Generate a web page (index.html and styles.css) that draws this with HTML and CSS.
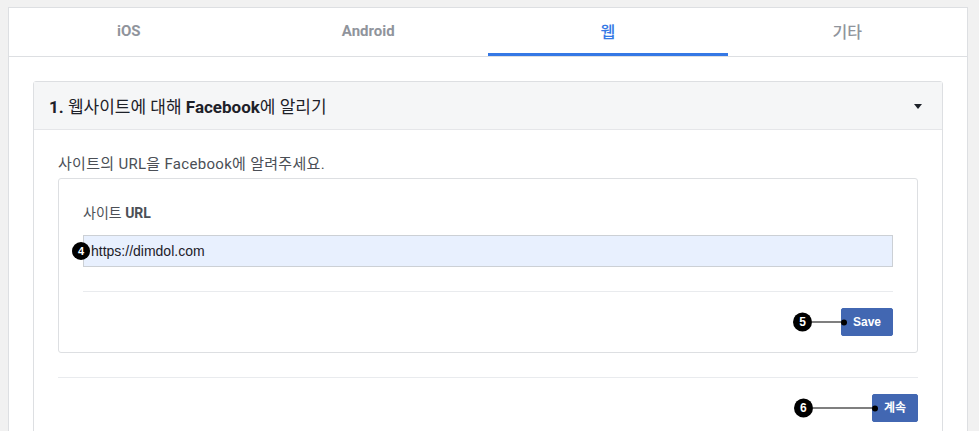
FILE: index.html
```html
<!DOCTYPE html>
<html lang="ko">
<head>
<meta charset="utf-8">
<link rel="stylesheet" href="styles.css">
</head>
<body>
<div class="card">
  <nav class="tabs">
    <div class="tab">iOS</div>
    <div class="tab">Android</div>
    <div class="tab ko active">웹</div>
    <div class="tab ko">기타</div>
  </nav>
  <section class="panel">
    <header class="panel-head">
      <span class="panel-title"><b>1.</b> 웹사이트에 대해 <b>Facebook</b>에 알리기</span>
      <span class="caret"></span>
    </header>
    <div class="panel-body">
      <p class="intro">사이트의 URL을 Facebook에 알려주세요.</p>
      <div class="box">
        <div class="label">사이트 <b>URL</b></div>
        <div class="input-wrap">
          <div class="input">https://dimdol.com</div>
          <span class="badge badge-input">4</span>
        </div>
        <div class="rule"></div>
        <div class="actions">
          <div class="btn-wrap">
            <span class="callout callout-save"><span class="badge">5</span><span class="line"></span><span class="dot"></span></span>
            <button class="btn">Save</button>
          </div>
        </div>
      </div>
      <div class="rule outer"></div>
      <div class="actions">
        <div class="btn-wrap">
          <span class="callout callout-next"><span class="badge">6</span><span class="line"></span><span class="dot"></span></span>
          <button class="btn">계속</button>
        </div>
      </div>
    </div>
  </section>
</div>
</body>
</html>
```

FILE: styles.css
```css
* { box-sizing: border-box; }
html, body { margin: 0; padding: 0; }
body {
  background: #f1f1f1;
  font-family: Roboto, "Liberation Sans", "Noto Sans CJK KR", sans-serif;
  color: #1d2129;
  height: 431px;
  overflow: hidden;
  padding: 7px 0 0 8px;
}
.card {
  width: 960px;
  height: 600px;
  background: #fff;
  border: 1px solid #dddfe2;
}
.tabs {
  display: flex;
  height: 49px;
  border-bottom: 1px solid #dddfe2;
}
.tab {
  flex: 1;
  display: flex;
  align-items: center;
  justify-content: center;
  font-size: 15px;
  font-weight: 700;
  color: #90949c;
  padding-bottom: 2px;
  font-family: Roboto, "Noto Sans CJK KR", sans-serif;
}
.tab.ko {
  font-size: 16px;
  font-weight: 500;
}
.tab.active {
  color: #3578e5;
  border-bottom: 3px solid #3578e5;
  padding-bottom: 0;
  padding-top: 1px;
}
.panel {
  margin: 24px 24px 0;
  border: 1px solid #dddfe2;
  border-radius: 3px 3px 0 0;
  height: 400px;
}
.panel-head {
  height: 48px;
  background: #f5f6f7;
  border-bottom: 1px solid #e5e6e9;
  display: flex;
  align-items: center;
  justify-content: space-between;
  padding: 0 20px 0 15px;
}
.panel-title {
  font-size: 17px;
  font-weight: 400;
  color: #1d2129;
  font-family: Roboto, "Noto Sans CJK KR", sans-serif;
}
.panel-title b { font-weight: 700; }
.caret {
  width: 0;
  height: 0;
  border-left: 4px solid transparent;
  border-right: 4px solid transparent;
  border-top: 5px solid #1d2129;
  margin-top: 2px;
}
.panel-body {
  padding: 24px 24px 0;
}
.intro {
  margin: 0;
  font-size: 15px;
  letter-spacing: 0.3px;
  line-height: 20px;
  color: #4b4f56;
}
.box {
  margin-top: 4px;
  border: 1px solid #dddfe2;
  border-radius: 3px;
  padding: 25px 24px 16px;
}
.label {
  font-size: 14px;
  line-height: 18px;
  font-weight: 400;
  color: #4b4f56;
  font-family: Roboto, "Noto Sans CJK KR", sans-serif;
}
.label b { font-weight: 700; }
.input-wrap {
  position: relative;
  margin-top: 13px;
}
.input {
  height: 32px;
  background: #e8f0fe;
  border: 1px solid #ccd0d5;
  font-family: "Liberation Sans", Arial, sans-serif;
  font-size: 14px;
  line-height: 30px;
  padding-left: 7px;
  color: #1d2129;
}
.rule {
  height: 1px;
  background: #e9ebee;
  margin: 24px 0 16px;
}
.actions {
  display: flex;
  justify-content: flex-end;
}
.btn-wrap { position: relative; }
.btn {
  display: block;
  height: 28px;
  padding: 0 11px;
  border: 1px solid #4267b2;
  border-radius: 2px;
  background: #4267b2;
  color: #fff;
  font-family: "Liberation Sans", "Noto Sans CJK KR", sans-serif;
  font-weight: 700;
  font-size: 12px;
  line-height: 26px;
}
.badge {
  width: 19px;
  height: 19px;
  border-radius: 50%;
  background: #000;
  color: #fff;
  font-family: "Liberation Sans", sans-serif;
  font-weight: 700;
  font-size: 12px;
  line-height: 19px;
  text-align: center;
  flex: none;
}
.badge-input {
  position: absolute;
  left: -11px;
  top: 7px;
  width: 18px;
  height: 18px;
  line-height: 18px;
  font-size: 11px;
}
.callout {
  position: absolute;
  top: 50%;
  transform: translateY(-50%);
  display: flex;
  align-items: center;
}
.callout-save { left: -48px; width: 54px; }
.callout-next { left: -78px; width: 84px; }
.line {
  flex: 1;
  height: 1px;
  background: #000;
}
.dot {
  width: 6px;
  height: 6px;
  border-radius: 50%;
  background: #000;
  flex: none;
}
```
